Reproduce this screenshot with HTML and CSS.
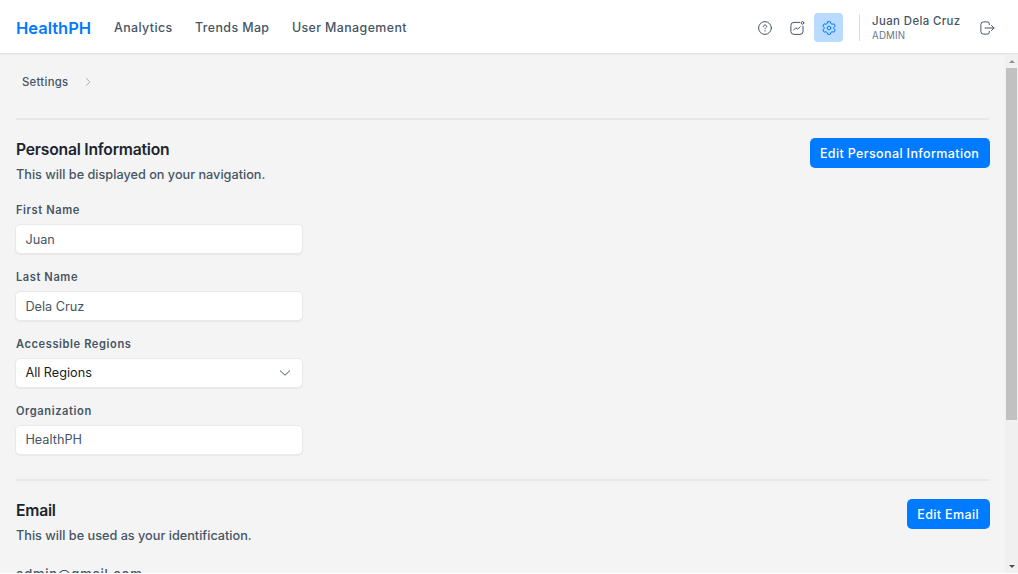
FILE: index.html
```html
<!DOCTYPE html>
<html lang="en">
<head>
<meta charset="utf-8">
<title>HealthPH</title>
<link rel="stylesheet" href="styles.css">
</head>
<body>
<header class="topbar">
  <a class="brand">HealthPH</a>
  <nav class="nav"><a>Analytics</a><a>Trends Map</a><a>User Management</a></nav>
  <div class="tools">
    <span class="tool"><svg class="icon" viewBox="0 0 16 16"><circle cx="8" cy="8" r="6.4"/><path d="M6.300 6.700c0-1 .7-1.700 1.700-1.700s1.700.7 1.700 1.500c0 1.200-1.700 1.100-1.700 2.300"/><path d="M8 10.600v.5"/></svg></span>
    <span class="tool"><svg class="icon" viewBox="0 0 16 16"><path d="M10.700 2.400H5Q1.900 2.400 1.900 5.400V11.400Q1.900 14.400 5 14.400H11Q14 14.400 14 11.400V6.200"/><path d="M4.700 10 6.800 7.700 8.700 9.100 11.300 6.800"/><circle cx="13.500" cy="2.900" r="1.300"/></svg></span>
    <span class="tool tool-active"><svg class="icon" viewBox="0 0 16 16"><path d="M6.700 1.700h2.600l.5 1.800 1.300.75 1.800-.45 1.300 2.250-1.300 1.300v1.300l1.300 1.300-1.300 2.250-1.800-.45-1.300.75-.5 1.800H6.700l-.5-1.800-1.300-.75-1.800.45-1.300-2.250 1.300-1.300v-1.300l-1.300-1.300 1.300-2.250 1.800.45 1.300-.75z"/><circle cx="8" cy="8" r="1.800"/></svg></span>
  </div>
  <div class="user"><span class="user-name">Juan Dela Cruz</span><span class="user-role">ADMIN</span></div>
  <svg class="icon logout" viewBox="0 0 16 16"><path d="M10.300 4.700V3.900Q10.300 1.900 8.300 1.900H4.400Q1.900 1.900 1.900 4.400V11.600Q1.900 14.100 4.400 14.100H8.300Q10.300 14.100 10.300 12.100V11.300"/><path d="M6 8h9M12.500 5.500 15 8l-2.500 2.500"/></svg>
</header>
<div class="viewport">
  <main class="page">
    <div class="crumbs"><span>Settings</span><svg class="crumb-arrow" viewBox="0 0 6 10"><path d="M1 1.200 4.900 5 1 8.800"/></svg></div>
    <section class="section personal">
      <div class="section-head">
        <div><h2>Personal Information</h2><p>This will be displayed on your navigation.</p></div>
        <button class="button button-personal">Edit Personal Information</button>
      </div>
      <div class="field"><label class="label">First Name</label><div class="input">Juan</div></div>
      <div class="field"><label class="label">Last Name</label><div class="input">Dela Cruz</div></div>
      <div class="field"><label class="label">Accessible Regions</label><div class="input select">All Regions<svg class="chevron" viewBox="0 0 12 8"><path d="m1 1.500 5 4.700 5-4.700"/></svg></div></div>
      <div class="field"><label class="label">Organization</label><div class="input">HealthPH</div></div>
    </section>
    <section class="section email">
      <div class="section-head">
        <div><h2>Email</h2><p>This will be used as your identification.</p></div>
        <button class="button button-email">Edit Email</button>
      </div>
      <div class="address">admin@gmail.com</div>
    </section>
  </main>
  <div class="scrollbar"><i class="arrow arrow-up"></i><i class="thumb"></i><i class="arrow arrow-down"></i></div>
</div>
</body>
</html>
```
FILE: styles.css
```css
* { box-sizing: border-box; }
body { margin: 0; height: 574px; overflow: hidden; background: #fff; color: #465564; font-family: Inter, sans-serif; }
h2, p { margin: 0; }
.topbar { height: 54px; display: flex; align-items: center; padding: 2px 23px 0 16px; border-bottom: 1.500px solid #e5e5e5; box-shadow: 0 1px #ececec; position: relative; }
.brand { width: 98px; color: #007aff; font-size: 16.500px; font-weight: 600; }
.nav { display: flex; gap: 22.500px; font-size: 12.400px; font-weight: 500; letter-spacing: .4px; }
.tools { display: flex; align-items: center; gap: 3px; margin-left: auto; margin-right: 16px; }
.tool { width: 29px; height: 29px; display: flex; align-items: center; justify-content: center; border-radius: 4px; }
.tool-active { background: #b8dbff; color: #007aff; }
.icon { width: 16px; height: 16px; fill: none; stroke: currentColor; stroke-width: 1; stroke-linecap: round; stroke-linejoin: round; }
.user { width: 120px; height: 27px; padding-left: 12px; border-left: 1px solid #d8dcdf; display: flex; flex-direction: column; white-space: nowrap; }
.user-name { font-size: 11.400px; line-height: 14px; font-weight: 500; letter-spacing: .4px; }
.user-role { font-size: 9.700px; line-height: 15px; color: #6b7885; letter-spacing: .2px; }
.viewport { height: 519px; display: flex; overflow: hidden; background: #f4f4f4; }
.page { flex: 1; padding: 0 16px; }
.crumbs { height: 64px; display: flex; align-items: center; gap: 16.500px; padding: 0 6px 9px; font-size: 11.300px; font-weight: 500; letter-spacing: .3px; }
.crumb-arrow { width: 6px; height: 10px; fill: none; stroke: #a6b0bb; stroke-width: 1; }
.section { border-top: 2px solid #e7e7e7; }
.personal { height: 361px; }
.section-head { height: 82.300px; padding-top: 18px; display: flex; justify-content: space-between; align-items: flex-start; }
.section h2 { color: #1c252e; font-size: 15.700px; line-height: 23px; font-weight: 600; letter-spacing: -.22px; }
.section p { margin-top: 3px; font-size: 12.700px; line-height: 21px; font-weight: 500; }
.button { height: 30px; margin-right: -.6px; border: 0; border-radius: 5px; padding: 0; color: #fff; background: #007aff; font: 500 12.500px Inter, sans-serif; letter-spacing: .37px; }
.button-personal { width: 180px; }
.button-email { width: 83px; }
.field { width: 287.500px; margin-left: -.6px; height: 66.850px; }
.label { display: block; height: 21.900px; line-height: 16.600px; padding-left: .5px; font-size: 11.100px; font-weight: 600; letter-spacing: .6px; }
.input { height: 30px; padding: 0 10px 0 9px; display: flex; align-items: center; background: #fff; border: 1px solid #e9e9e9; border-radius: 5px; font-size: 12.700px; box-shadow: 0 1px 1px #0000000d; }
.select { justify-content: space-between; color: #171d23; }
.chevron { width: 12px; height: 8px; margin-right: 1px; fill: none; stroke: #465564; stroke-width: 1; }
.address { font-size: 13px; font-weight: 500; line-height: 22px; letter-spacing: .75px; }
.scrollbar { width: 13px; background: #f0f0f0; display: flex; flex-direction: column; align-items: center; }
.thumb { width: 11px; height: 352px; background: #c1c1c1; }
.arrow { height: 14px; display: flex; align-items: center; }
.arrow::before { content: ""; border: 3px solid transparent; }
.arrow-up::before { border-top: 0; border-bottom-color: #929292; }
.arrow-down { margin-top: auto; }
.arrow-down::before { border-bottom: 0; border-top-color: #505050; }
```
